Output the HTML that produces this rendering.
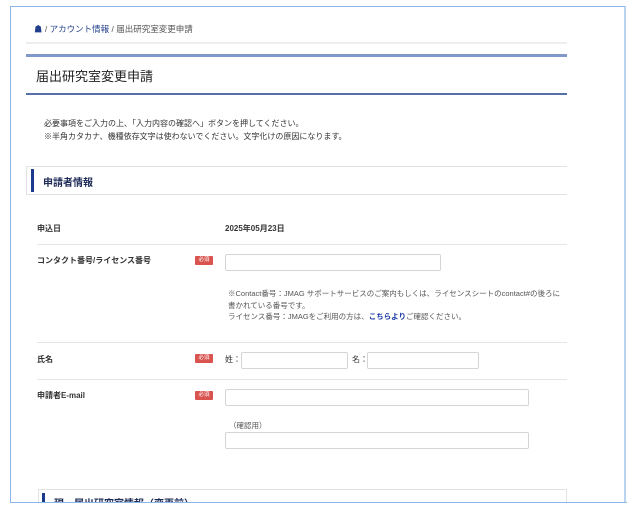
<!DOCTYPE html>
<html><head><meta charset="utf-8"><style>
*{margin:0;padding:0;box-sizing:border-box}
body{width:635px;height:518px;background:#fff;font-family:"Liberation Sans","Noto Sans CJK JP",sans-serif;color:#333;position:relative;overflow:hidden}
.a{position:absolute;white-space:nowrap}
.frame{position:absolute;left:10px;top:6px;width:616px;height:497px;border:1px solid #8db6e6;border-right:2px solid #b9d3f0}
.line{position:absolute;left:26px;width:541px}
.inp{position:absolute;border:1px solid #d5d5d5;border-radius:2px;background:#fff}
.lbl{font-size:8px;font-weight:bold;color:#333}
.badge{position:absolute;left:195px;width:18px;height:9px;background:#d9534f;color:#fff;font-size:5.5px;text-align:center;line-height:9px;border-radius:1px}
.sm{font-size:7.5px;color:#555}
</style></head><body>
<div class="frame"></div>
<div class="a" style="left:34px;top:23px;font-size:8.5px;color:#555"><span style="color:#223f8a">&#9751;</span> / <span style="color:#223f8a">アカウント情報</span> / 届出研究室変更申請</div>
<div class="line" style="top:42px;height:2px;background:#eee"></div>
<div class="line" style="top:54px;height:3px;background:#8099c9"></div>
<div class="a" style="left:36px;top:66px;font-size:13px;color:#222">届出研究室変更申請</div>
<div class="line" style="top:93px;height:2px;background:#5670a8"></div>
<div class="a" style="left:44px;top:118px;font-size:8px;color:#333">必要事項をご入力の上、「入力内容の確認へ」ボタンを押してください。</div>
<div class="a" style="left:44px;top:131px;font-size:8px;color:#333">※半角カタカナ、機種依存文字は使わないでください。文字化けの原因になります。</div>
<div style="position:absolute;left:26px;top:166px;width:541px;height:29px;border:1px solid #e2e2e2;border-right:none"></div>
<div style="position:absolute;left:31px;top:169px;width:3px;height:23px;background:#1b3a8c"></div>
<div class="a" style="left:43px;top:174px;font-size:10px;font-weight:bold;color:#1d2a55">申請者情報</div>
<div class="a lbl" style="left:37px;top:223px">申込日</div>
<div class="a lbl" style="left:225px;top:223px">2025年05月23日</div>
<div class="line" style="left:37px;width:530px;top:244px;height:1px;background:#e5e5e5"></div>
<div class="a lbl" style="left:37px;top:255px">コンタクト番号/ライセンス番号</div>
<div class="badge" style="top:256px">必須</div>
<div class="inp" style="left:225px;top:254px;width:216px;height:17px"></div>
<div class="a sm" style="left:228px;top:288px">※Contact番号：JMAG サポートサービスのご案内もしくは、ライセンスシートのcontact#の後ろに</div>
<div class="a sm" style="left:228px;top:300px">書かれている番号です。</div>
<div class="a sm" style="left:228px;top:311px">ライセンス番号：JMAGをご利用の方は、<span style="color:#1b3aa8;font-weight:bold">こちらより</span>ご確認ください。</div>
<div class="line" style="left:37px;width:530px;top:342px;height:1px;background:#e5e5e5"></div>
<div class="a lbl" style="left:37px;top:354px">氏名</div>
<div class="badge" style="top:354px">必須</div>
<div class="a lbl" style="left:225px;top:354px;font-weight:normal">姓：</div>
<div class="inp" style="left:241px;top:352px;width:107px;height:17px"></div>
<div class="a lbl" style="left:352px;top:354px;font-weight:normal">名：</div>
<div class="inp" style="left:367px;top:352px;width:112px;height:17px"></div>
<div class="line" style="left:37px;width:530px;top:379px;height:1px;background:#e5e5e5"></div>
<div class="a lbl" style="left:37px;top:390px">申請者E-mail</div>
<div class="badge" style="top:391px">必須</div>
<div class="inp" style="left:225px;top:389px;width:304px;height:17px"></div>
<div class="a sm" style="left:229px;top:420px">（確認用）</div>
<div class="inp" style="left:225px;top:432px;width:304px;height:17px"></div>
<div style="position:absolute;left:38px;top:489px;width:529px;height:20px;border:1px solid #e2e2e2"></div>
<div style="position:absolute;left:42px;top:493px;width:3px;height:10px;background:#1b3a8c"></div>
<div class="a" style="left:54px;top:495px;font-size:10px;font-weight:bold;color:#1d2a55">現・届出研究室情報（変更前）</div>
<div style="position:absolute;left:0;top:503px;width:635px;height:15px;background:#fff"></div>
<div style="position:absolute;left:10px;top:502px;width:617px;height:1px;background:#8db6e6"></div>
</body></html>
